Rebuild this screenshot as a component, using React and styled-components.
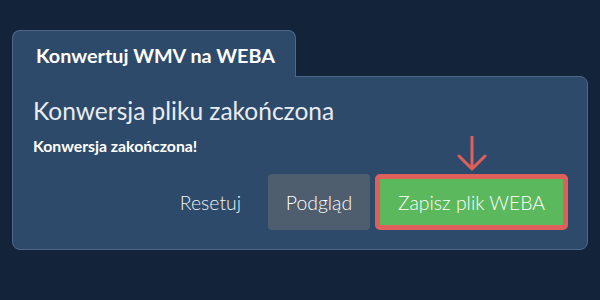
import React from "react";
import styled, { createGlobalStyle } from "styled-components";

const Global = createGlobalStyle`
  html, body { margin: 0; padding: 0; background: #12233a; }
  body { font-family: Lato, "Open Sans", sans-serif; width: 600px; height: 300px; overflow: hidden; }
`;

const Page = styled.div`
  padding: 30px 12px 0 12px;
`;

const Tab = styled.div`
  display: inline-block;
  box-sizing: border-box;
  width: 284px;
  height: 47px;
  padding: 12px 0 0 23px;
  background: #2e4a6a;
  border: 1px solid #4f6888;
  border-bottom: none;
  border-radius: 8px 8px 0 0;
  color: #ffffff;
  font-weight: 700;
  font-size: 19.8px;
  line-height: 24px;
  position: relative;
  z-index: 1;
  margin-bottom: -1px;
`;

const Panel = styled.div`
  box-sizing: border-box;
  width: 576px;
  height: 174px;
  background: #2e4a6a;
  border: 1px solid #4f6888;
  border-radius: 0 8px 8px 8px;
  padding: 19px 19px 19px 20px;
  display: flex;
  flex-direction: column;
`;

const Heading = styled.h2`
  margin: 0;
  font-weight: 400;
  font-size: 24.5px;
  line-height: 29px;
  color: #e8ecf0;
`;

const Message = styled.p`
  margin: 12px 0 0 0;
  font-weight: 700;
  font-size: 15.8px;
  line-height: 18px;
  color: #ffffff;
`;

const Actions = styled.div`
  margin-top: auto;
  display: flex;
  justify-content: flex-end;
  align-items: center;
  gap: 5px;
`;

const Button = styled.button`
  box-sizing: border-box;
  height: 56px;
  font-family: inherit;
  font-size: 19.4px;
  font-weight: 300;
  border-radius: 4px;
  border: none;
  cursor: pointer;
  color: #ffffff;
  padding: 0;
`;

const LinkButton = styled(Button)`
  background: transparent;
  color: #f0f3f6;
  padding: 0 17px 0 0;
`;

const GreyButton = styled(Button)`
  background: #4e5e6e;
  width: 102px;
  margin-left: 5px;
`;

const SaveWrap = styled.div`
  position: relative;
`;

const SaveButton = styled(Button)`
  background: #5cb85c;
  width: 193px;
  border: 5px solid #df5f5a;
  border-radius: 5px;
  display: block;
`;

const Arrow = styled.svg`
  position: absolute;
  left: 50%;
  top: -38px;
  transform: translateX(-50%);
`;

export default function App() {
  return (
    <>
      <Global />
      <Page>
        <Tab>Konwertuj WMV na WEBA</Tab>
        <Panel>
          <Heading>Konwersja pliku zakończona</Heading>
          <Message>Konwersja zakończona!</Message>
          <Actions>
            <LinkButton>Resetuj</LinkButton>
            <GreyButton>Podgląd</GreyButton>
            <SaveWrap>
              <Arrow width="30" height="36" viewBox="0 0 30 36">
                <path
                  d="M15 1 V33 M2 20 L15 33 L28 20"
                  fill="none"
                  stroke="#df5f5a"
                  strokeWidth="3"
                  strokeLinecap="round"
                  strokeLinejoin="round"
                />
              </Arrow>
              <SaveButton>Zapisz plik WEBA</SaveButton>
            </SaveWrap>
          </Actions>
        </Panel>
      </Page>
    </>
  );
}
